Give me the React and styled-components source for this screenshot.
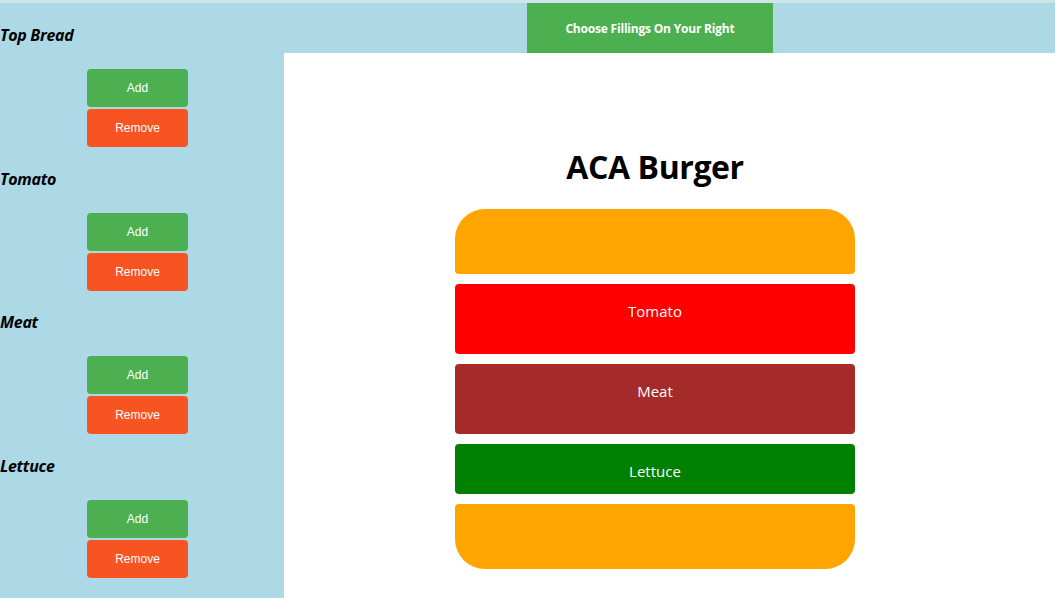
import React from "react";
import styled, { createGlobalStyle } from "styled-components";

const fillings = ["Top Bread", "Tomato", "Meat", "Lettuce"];

const layers = [
  { kind: "topBread", color: "#ffa500", height: 65 },
  { kind: "filling", color: "#ff0000", height: 70, label: "Tomato" },
  { kind: "filling", color: "#a52a2a", height: 70, label: "Meat" },
  { kind: "filling", color: "#008000", height: 50, label: "Lettuce" },
  { kind: "bottomBread", color: "#ffa500", height: 65 },
];

export default function App() {
  return (
    <>
      <GlobalStyle />
      <Page>
        <Sidebar>
          {fillings.map(name => (
            <Group key={name}>
              <GroupTitle>{name}</GroupTitle>
              <Buttons>
                <ActionButton variant="add">Add</ActionButton>
                <ActionButton variant="remove">Remove</ActionButton>
              </Buttons>
            </Group>
          ))}
        </Sidebar>
        <TopBar>
          <Banner>Choose Fillings On Your Right</Banner>
        </TopBar>
        <Main>
          <Title>ACA Burger</Title>
          <Burger>
            {layers.map((layer, i) => (
              <Layer
                key={i}
                $kind={layer.kind}
                $color={layer.color}
                $height={layer.height}
              >
                {layer.label}
              </Layer>
            ))}
          </Burger>
        </Main>
      </Page>
    </>
  );
}

const GlobalStyle = createGlobalStyle`
  html, body {
    margin: 0;
    padding: 0;
    background: #ffffff;
  }
`;

const Page = styled.div`
  width: 1055px;
  height: 595px;
  border-top: 3px solid #cfe4ea;
  display: grid;
  grid-template-columns: 284px 1fr;
  grid-template-rows: 50px 1fr;
  overflow: hidden;
`;

const Sidebar = styled.aside`
  grid-column: 1;
  grid-row: 1 / 3;
  background: #add8e6;
  display: flex;
  flex-direction: column;
`;

const Group = styled.div`
  padding-top: 22px;
  height: 143.67px;
  flex-shrink: 0;
  box-sizing: border-box;
`;

const GroupTitle = styled.div`
  font-family: "Open Sans", "Noto Sans", sans-serif;
  font-style: italic;
  font-weight: 700;
  font-size: 16px;
  line-height: 20px;
  letter-spacing: -0.3px;
  color: #000000;
`;

const Buttons = styled.div`
  margin-top: 24px;
  margin-left: 87px;
  display: flex;
  flex-direction: column;
  gap: 2px;
  width: 101px;
`;

const ActionButton = styled.button`
  height: 38px;
  border: none;
  border-radius: 4px;
  background: ${props => (props.variant === "add" ? "#4caf50" : "#f75421")};
  color: #ffffff;
  font-family: "Liberation Sans", Arial, sans-serif;
  font-size: 12px;
  cursor: pointer;
`;

const TopBar = styled.header`
  grid-column: 2;
  grid-row: 1;
  background: #add8e6;
  display: flex;
  padding-left: 243px;
`;

const Banner = styled.div`
  width: 246px;
  height: 50px;
  background: #4caf50;
  color: #ffffff;
  display: flex;
  align-items: center;
  justify-content: center;
  font-family: "Open Sans", "Noto Sans", sans-serif;
  font-weight: 700;
  font-size: 12px;
  letter-spacing: -0.2px;
`;

const Main = styled.main`
  grid-column: 2;
  grid-row: 2;
  background: #ffffff;
  display: flex;
  flex-direction: column;
  align-items: center;
  padding-right: 29px;
`;

const Title = styled.h1`
  margin: 94px 0 0;
  font-family: "Open Sans", "Noto Sans", sans-serif;
  font-weight: 700;
  font-size: 32px;
  line-height: 40px;
  letter-spacing: -0.4px;
  color: #000000;
`;

const Burger = styled.div`
  margin-top: 22px;
  width: 400px;
  display: flex;
  flex-direction: column;
  gap: 10px;
`;

const Layer = styled.div`
  height: ${props => props.$height}px;
  background: ${props => props.$color};
  border-radius: ${props =>
    props.$kind === "topBread"
      ? "30px 30px 4px 4px"
      : props.$kind === "bottomBread"
      ? "4px 4px 30px 30px"
      : "4px"};
  box-sizing: border-box;
  padding-top: 17px;
  text-align: center;
  color: #ffffff;
  font-family: "Open Sans", "Noto Sans", sans-serif;
  font-size: 15px;
  line-height: 20px;
`;
